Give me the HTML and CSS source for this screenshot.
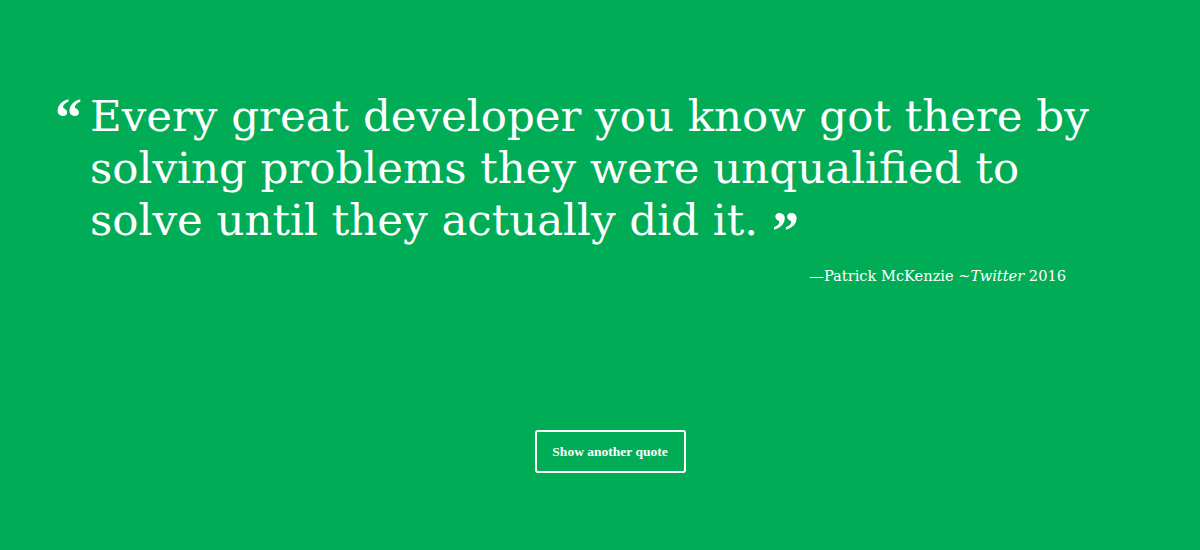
FILE: index.html
```html
<!DOCTYPE html>
<html lang="en">
<head>
<meta charset="utf-8">
<title>Random Quote</title>
<link rel="stylesheet" href="styles.css">
</head>
<body>
<main class="page">
  <blockquote class="quote">
    <div class="quote-body">
      <span class="mark mark-open">“</span>
      <p class="quote-text">Every great developer you know got there by solving problems they were unqualified to solve until they actually did it.<span class="mark mark-close">”</span></p>
    </div>
    <p class="cite">—Patrick McKenzie ~<em>Twitter</em> 2016</p>
  </blockquote>
  <div class="actions">
    <button class="btn" type="button">Show another quote</button>
  </div>
</main>
</body>
</html>
```

FILE: styles.css
```css
html, body {
  margin: 0;
  padding: 0;
}
body {
  background: #00ad56;
  color: #fff;
  font-family: "DejaVu Serif", "Liberation Serif", serif;
  height: 550px;
}
.page {
  display: flex;
  flex-direction: column;
  padding: 90px 0 0 55px;
}
.quote {
  margin: 0;
  width: 1045px;
}
.quote-body {
  display: flex;
  align-items: flex-start;
}
.mark {
  font-family: "Liberation Serif", serif;
  font-weight: bold;
}
.mark-open {
  width: 35px;
  font-size: 54px;
  line-height: 1;
  padding-top: 1px;
}
.mark-close {
  display: inline-block;
  font-size: 54px;
  line-height: 0;
  margin-left: 14px;
  vertical-align: -14px;
}
.quote-text {
  margin: 0;
  font-size: 43.5px;
  line-height: 52px;
  flex: 1;
}
.cite {
  margin: 21px 34px 0 0;
  text-align: right;
  font-size: 14.6px;
}
.cite em {
  font-style: italic;
}
.actions {
  display: flex;
  justify-content: center;
  padding: 146px 0 0 0;
  margin-left: -35px;
}
.btn {
  font-family: "Liberation Serif", serif;
  font-weight: bold;
  font-size: 13.5px;
  white-space: nowrap;
  color: #fff;
  background: transparent;
  border: 2px solid #fff;
  border-radius: 3px;
  padding: 0;
  height: 43px;
  width: 151px;
}
```
